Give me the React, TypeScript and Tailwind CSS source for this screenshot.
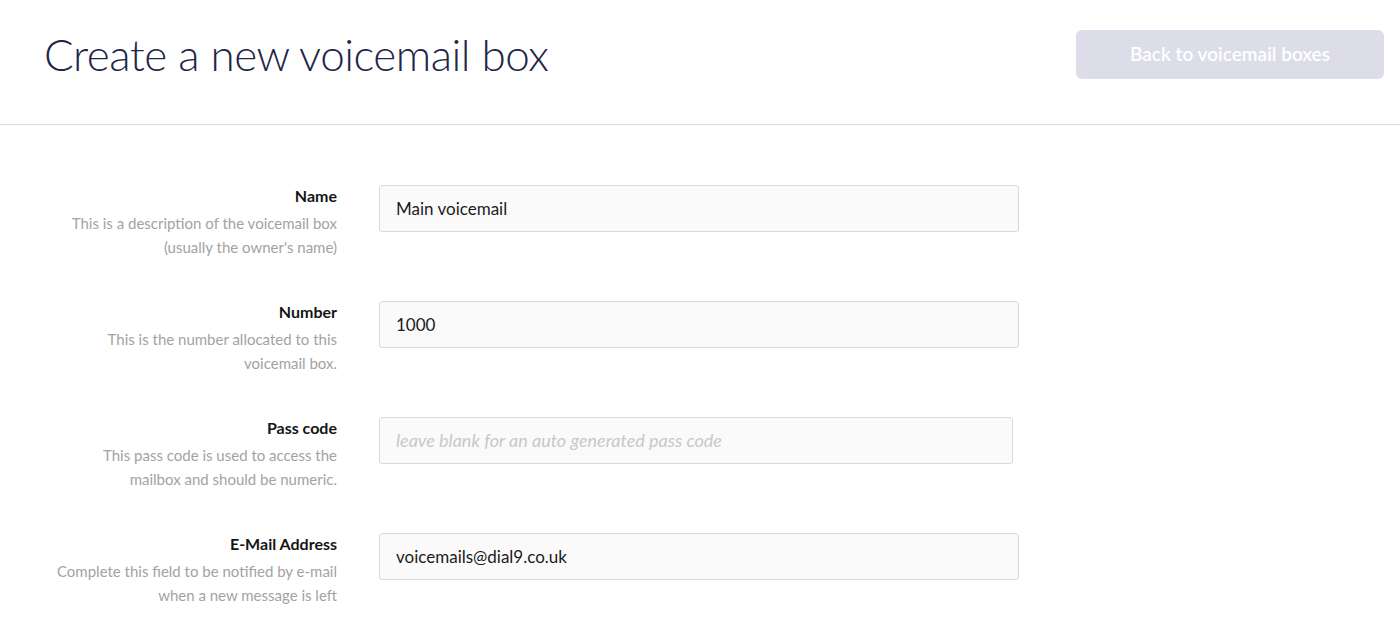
const font = { fontFamily: "Lato, 'Open Sans', sans-serif" };

const fields = [
  {
    label: "Name",
    help: ["This is a description of the voicemail box", "(usually the owner's name)"],
    value: "Main voicemail",
    width: "w-[640px]",
  },
  {
    label: "Number",
    help: ["This is the number allocated to this", "voicemail box."],
    value: "1000",
    width: "w-[640px]",
  },
  {
    label: "Pass code",
    help: ["This pass code is used to access the", "mailbox and should be numeric."],
    value: "",
    placeholder: "leave blank for an auto generated pass code",
    width: "w-[634px]",
  },
  {
    label: "E-Mail Address",
    help: ["Complete this field to be notified by e-mail", "when a new message is left"],
    value: "voicemails@dial9.co.uk",
    width: "w-[640px]",
  },
];

export default function App() {
  return (
    <div className="min-h-[631px] bg-white" style={font}>
      <div className="flex h-[125px] items-center justify-between border-b border-[#dcdcdc] pl-[44px] pr-[16px]">
        <h1 className="-mt-[16px] text-[44px] font-light tracking-[-0.5px] text-[#1f2647]">
          Create a new voicemail box
        </h1>
        <button className="-mt-[16px] h-[49px] w-[308px] rounded-[6px] bg-[#dcdde9] text-[19px] font-semibold text-white">
          Back to voicemail boxes
        </button>
      </div>

      <div className="flex flex-col gap-[42px] pt-[60px]">
        {fields.map((f) => (
          <div key={f.label} className="flex items-start">
            <div className="w-[337px] text-right">
              <div className="text-[16px] font-bold leading-[22px] text-[#151515]">{f.label}</div>
              <div className="mt-[4px] text-[15px] leading-[24px] text-[#a3a3a3]">
                {f.help.map((h) => (
                  <div key={h}>{h}</div>
                ))}
              </div>
            </div>
            <input
              readOnly
              value={f.value}
              placeholder={f.placeholder}
              className={`ml-[42px] h-[47px] ${f.width} rounded-[3px] border border-[#d9d9d9] bg-[#fafafa] px-[16px] text-[17px] text-[#1a1a1a] outline-none placeholder:text-[18px] placeholder:italic placeholder:text-[#c8c8c8]`}
              style={font}
            />
          </div>
        ))}
      </div>
    </div>
  );
}
